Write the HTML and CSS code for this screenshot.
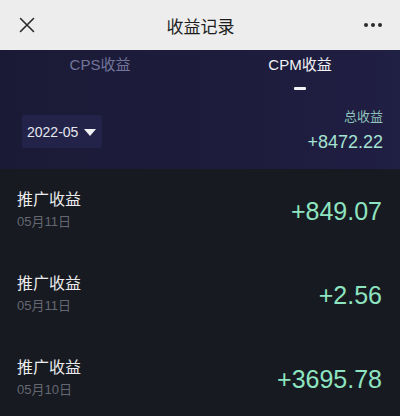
FILE: index.html
```html
<!DOCTYPE html>
<html lang="zh">
<head>
<meta charset="utf-8">
<link rel="stylesheet" href="styles.css">
</head>
<body>
<div class="page">
  <div class="topbar">
    <svg class="close" width="16" height="16" viewBox="0 0 16 16"><path d="M1.5 1.5L14.5 14.5M14.5 1.5L1.5 14.5" stroke="#2a2a2a" stroke-width="1.6" fill="none" stroke-linecap="round"/></svg>
    <div class="title">收益记录</div>
    <div class="more"><span></span><span></span><span></span></div>
  </div>
  <div class="hero">
    <div class="tabs">
      <div class="tab">CPS收益</div>
      <div class="tab active">CPM收益<i class="bar"></i></div>
    </div>
    <div class="summary">
      <div class="month">2022-05 <span class="tri"></span></div>
      <div class="total">
        <div class="total-label">总收益</div>
        <div class="total-value">+8472.22</div>
      </div>
    </div>
  </div>
  <div class="list">
    <div class="row">
      <div class="info"><div class="name">推广收益</div><div class="date">05月11日</div></div>
      <div class="amount">+849.07</div>
    </div>
    <div class="row">
      <div class="info"><div class="name">推广收益</div><div class="date">05月11日</div></div>
      <div class="amount">+2.56</div>
    </div>
    <div class="row">
      <div class="info"><div class="name">推广收益</div><div class="date">05月10日</div></div>
      <div class="amount">+3695.78</div>
    </div>
  </div>
</div>
</body>
</html>
```

FILE: styles.css
```css
html, body {
  margin: 0;
  padding: 0;
}
* {
  box-sizing: border-box;
}
body {
  width: 400px;
  height: 416px;
  overflow: hidden;
  background: #171a21;
  font-family: "Liberation Sans", "Noto Sans CJK SC", sans-serif;
}
.page {
  display: flex;
  flex-direction: column;
  height: 416px;
  overflow: hidden;
}
.topbar {
  flex-shrink: 0;
  height: 50px;
  background: #ededee;
  display: grid;
  grid-template-columns: 1fr auto 1fr;
  align-items: center;
  padding: 0 18px 0 19px;
}
.close {
  display: block;
}
.title {
  font-size: 17px;
  color: #1e1e1e;
}
.more {
  justify-self: end;
  display: flex;
  gap: 3px;
}
.more span {
  width: 4px;
  height: 4px;
  border-radius: 50%;
  background: #2a2a2a;
}
.hero {
  flex-shrink: 0;
  height: 119px;
  background: linear-gradient(90deg, #1b1a36 0%, #1d1c3c 60%, #201f44 100%);
  display: flex;
  flex-direction: column;
}
.tabs {
  display: grid;
  grid-template-columns: 1fr 1fr;
  padding-top: 5px;
}
.tab {
  text-align: center;
  font-size: 15px;
  color: #72759a;
  height: 20px;
  line-height: 20px;
  position: relative;
}
.tab.active {
  color: #f2f2f4;
}
.bar {
  position: absolute;
  left: 50%;
  top: 32px;
  width: 12px;
  height: 3px;
  margin-left: -6px;
  background: #f2f2f4;
  border-radius: 1px;
}
.summary {
  display: flex;
  justify-content: space-between;
  align-items: flex-start;
  padding: 17px 17px 0 22px;
}
.month {
  background: #23234a;
  color: #e6e6ee;
  font-size: 14px;
  height: 33px;
  padding: 0 6px 0 5px;
  margin-top: 23px;
  border-radius: 2px;
  display: flex;
  align-items: center;
  gap: 6px;
}
.tri {
  width: 0;
  height: 0;
  border-left: 6px solid transparent;
  border-right: 6px solid transparent;
  border-top: 7px solid #f2f2f4;
  margin-top: 1px;
}
.total {
  text-align: right;
  margin-top: 16px;
}
.total-label {
  font-size: 13px;
  color: #8fc3bb;
  line-height: 18px;
}
.total-value {
  font-size: 18px;
  color: #a6e3d3;
  line-height: 24px;
  margin-top: 4px;
}
.list {
  flex: 1;
  padding-top: 19px;
}
.row {
  height: 84px;
  display: flex;
  justify-content: space-between;
  padding: 0 18px 0 17px;
}
.info {
  display: flex;
  flex-direction: column;
}
.name {
  font-size: 16px;
  color: #ececee;
  line-height: 24px;
}
.date {
  font-size: 13px;
  color: #646872;
  line-height: 18px;
  margin-top: 1px;
}
.amount {
  font-size: 25px;
  color: #8ee4c0;
  line-height: 30px;
  margin-top: 8px;
}
```
